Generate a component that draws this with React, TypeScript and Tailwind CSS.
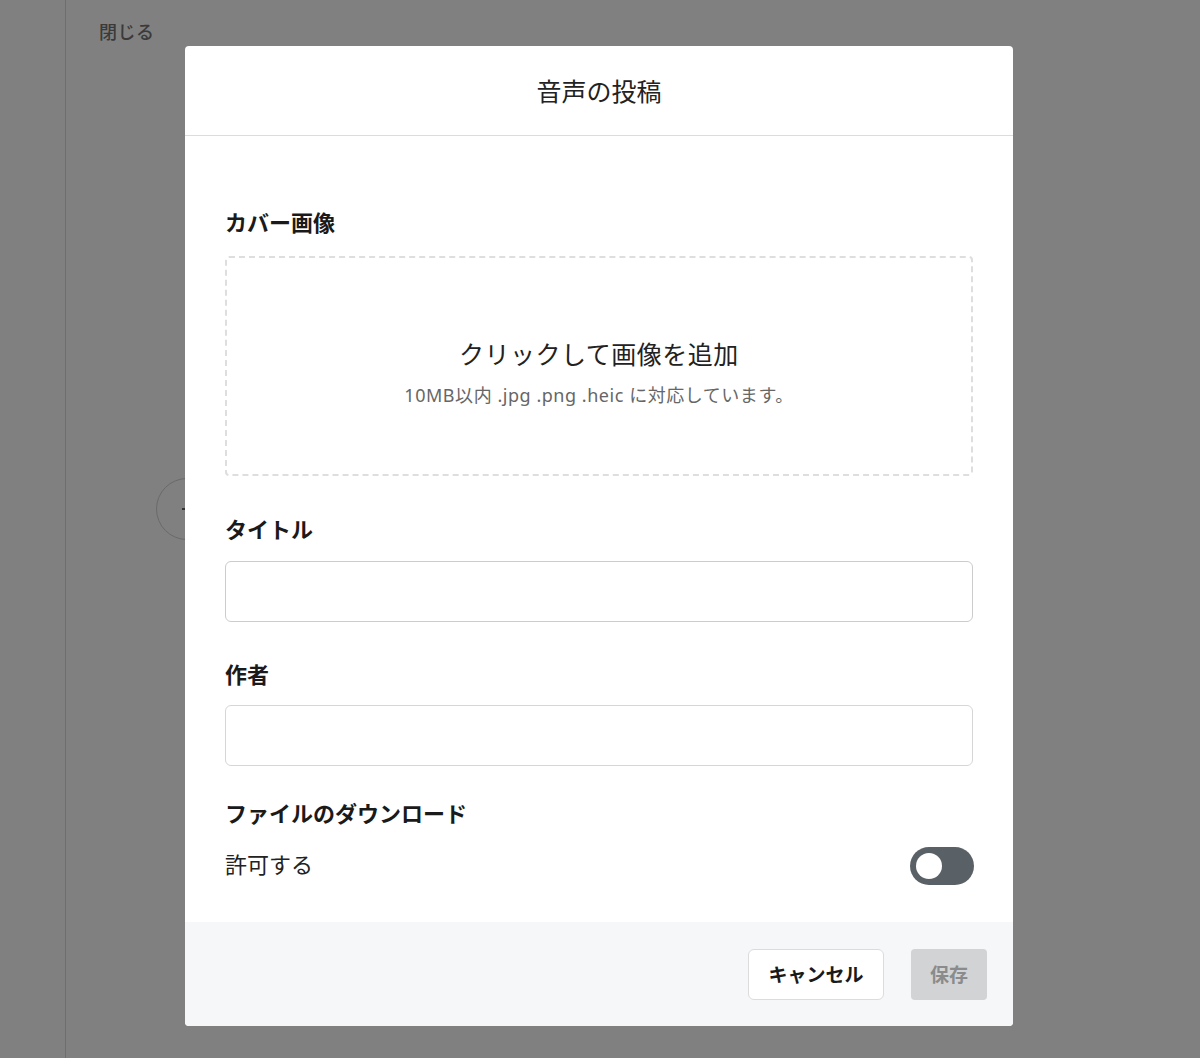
import React from "react";

export default function App() {
  const font = { fontFamily: '"Noto Sans CJK JP", "Noto Sans", sans-serif' };
  const latin = { fontFamily: '"Noto Sans", "Noto Sans CJK JP", sans-serif' };
  return (
    <div className="relative w-full h-[1058px] bg-[#808080] overflow-hidden" style={font}>
      {/* underlying page (dimmed) */}
      <div className="flex h-full">
        <div className="w-[66px] shrink-0 border-r border-[#6e6e6e]" />
        <div className="flex-1 pl-[33px] pt-[18px]">
          <div className="text-[18px] leading-[26px] tracking-[0.03em] text-[#3a3a3a] font-medium">閉じる</div>
          <div className="mt-[434px] ml-[57px] w-[62px] h-[62px] rounded-full border border-[#6a6a6a] flex items-center justify-center">
            <div className="w-[10px] h-[2px] bg-[#333]" />
          </div>
        </div>
      </div>

      {/* modal */}
      <div className="absolute left-[185px] top-[46px] w-[828px] h-[980px] bg-white rounded-[4px] flex flex-col overflow-hidden">
        <div className="h-[90px] shrink-0 border-b border-[#dcdcdc] flex items-center justify-center text-[25px] text-[#222]">
          音声の投稿
        </div>
        <div className="flex-1 px-10 pt-[72px]">
          <div className="text-[22px] leading-[26px] font-bold text-[#1a1a1a]">カバー画像</div>
          <div className="mt-[22px] h-[220px] border-2 border-dashed border-[#dedede] rounded-[4px] flex flex-col items-center justify-center pt-[11px]">
            <div className="text-[25px] leading-[34px] tracking-[0.02em] text-[#222]">クリックして画像を追加</div>
            <div className="mt-[13px] text-[18px] leading-[24px] tracking-[0.03em] text-[#666]" style={latin}>
              10MB以内 .jpg .png .heic に対応しています。
            </div>
          </div>

          <div className="mt-[39px] text-[22px] leading-[26px] font-bold text-[#1a1a1a]">タイトル</div>
          <div className="mt-[20px] h-[61px] border border-[#cccccc] rounded-[6px]" />

          <div className="mt-[38px] text-[22px] leading-[26px] font-bold text-[#1a1a1a]">作者</div>
          <div className="mt-[19px] h-[61px] border border-[#d6d6d6] rounded-[6px]" />

          <div className="mt-[33px] text-[22px] leading-[26px] font-bold text-[#1a1a1a]">ファイルのダウンロード</div>
          <div className="mt-[22px] flex items-center justify-between">
            <div className="text-[22px] leading-[30px] pb-[6px] text-[#222]">許可する</div>
            <div className="w-[64px] h-[38px] rounded-full bg-[#5a6166] flex items-center pl-[6px] mr-[-1px]">
              <div className="w-[26px] h-[26px] rounded-full bg-white" />
            </div>
          </div>
        </div>
        <div className="h-[104px] shrink-0 bg-[#f6f7f8] flex items-center justify-end gap-[27px] pr-[26px]">
          <button className="w-[136px] h-[51px] bg-white border border-[#dcdcdc] rounded-[6px] text-[19px] font-bold text-[#1a1a1a]">
            キャンセル
          </button>
          <button className="w-[76px] h-[51px] bg-[#d1d3d5] rounded-[4px] text-[19px] font-bold text-[#8a8b8c]">
            保存
          </button>
        </div>
      </div>
    </div>
  );
}
